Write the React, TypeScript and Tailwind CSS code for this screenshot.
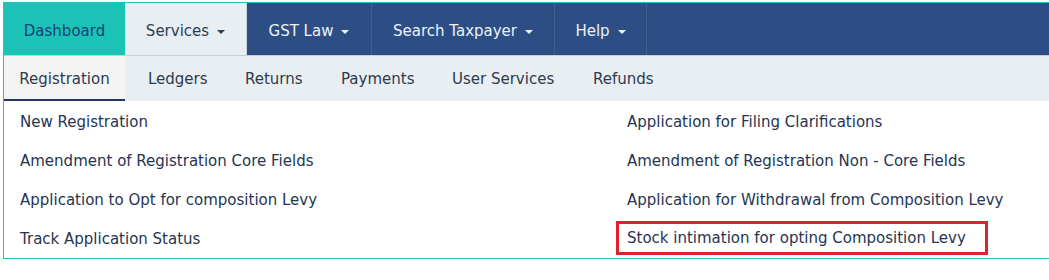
export default function App() {
  const top = [
    { label: "GST Law", w: "w-[125px]" },
    { label: "Search Taxpayer", w: "w-[183px]" },
    { label: "Help", w: "w-[92px]" },
  ];
  const sub = [
    { label: "Ledgers", w: "w-[97px]" },
    { label: "Returns", w: "w-[96px]" },
    { label: "Payments", w: "w-[111px]" },
    { label: "User Services", w: "w-[141px]" },
    { label: "Refunds", w: "w-[90px]" },
  ];
  const left = [
    "New Registration",
    "Amendment of Registration Core Fields",
    "Application to Opt for composition Levy",
    "Track Application Status",
  ];
  const right = [
    "Application for Filing Clarifications",
    "Amendment of Registration Non - Core Fields",
    "Application for Withdrawal from Composition Levy",
  ];

  return (
    <div className="w-[1049px] h-[280px] bg-white pt-[2px] pl-[3px] font-['DejaVu_Sans',Verdana,sans-serif] text-[15px]">
      <div className="border-l border-t border-b border-[#1fc2bb] h-[257px] flex flex-col">
        {/* top nav */}
        <nav className="flex h-[53px] shrink-0 bg-[#2c4e85] border-b border-[#c9ced3]">
          <a className="w-[121px] flex items-center justify-center pt-[5px] bg-[#1bc3b7] text-[#1d3f6e]">Dashboard</a>
          <a className="w-[122px] flex items-center justify-center gap-2 pt-[5px] bg-[#e9eef2] text-[#2c3e57] border-r border-[#c7d3e2]">
            Services
            <span className="border-x-[4px] border-x-transparent border-t-[4px] border-t-[#2c3e57]" />
          </a>
          {top.map((t) => (
            <a
              key={t.label}
              className={`${t.w} flex items-center justify-center gap-2 pt-[5px] text-[#eef2f8] border-r border-[#3f5f93]`}
            >
              {t.label}
              <span className="border-x-[4px] border-x-transparent border-t-[4px] border-t-[#eef2f8]" />
            </a>
          ))}
        </nav>
        {/* sub nav */}
        <div className="flex h-[45px] shrink-0 bg-[#e9eef2]">
          <a className="w-[121px] flex items-center justify-center bg-[#f4f4f5] text-[#2e3a4f] border-b-2 border-[#24355e] pt-[3px]">
            Registration
          </a>
          <div className="flex pl-[23px]">
            {sub.map((s) => (
              <a key={s.label} className={`${s.w} flex items-center pt-[2px] text-[#2e3a4f]`}>
                {s.label}
              </a>
            ))}
          </div>
        </div>
        {/* dropdown items */}
        <div className="flex-1 grid grid-cols-[612px_1fr] text-[#253552] pt-[1px]">
          <ul className="flex flex-col">
            {left.map((l) => (
              <li key={l} className="h-[39px] flex items-center pl-[16px] pt-[1px]">
                {l}
              </li>
            ))}
          </ul>
          <ul className="flex flex-col">
            {right.map((r) => (
              <li key={r} className="h-[39px] flex items-center pl-[11px] pt-[1px]">
                {r}
              </li>
            ))}
            <li className="h-[34px] w-[372px] flex items-center pl-[8px] pt-[1px] mt-[2px] border-[3px] border-[#e3202c]">
              Stock intimation for opting Composition Levy
            </li>
          </ul>
        </div>
      </div>
    </div>
  );
}
